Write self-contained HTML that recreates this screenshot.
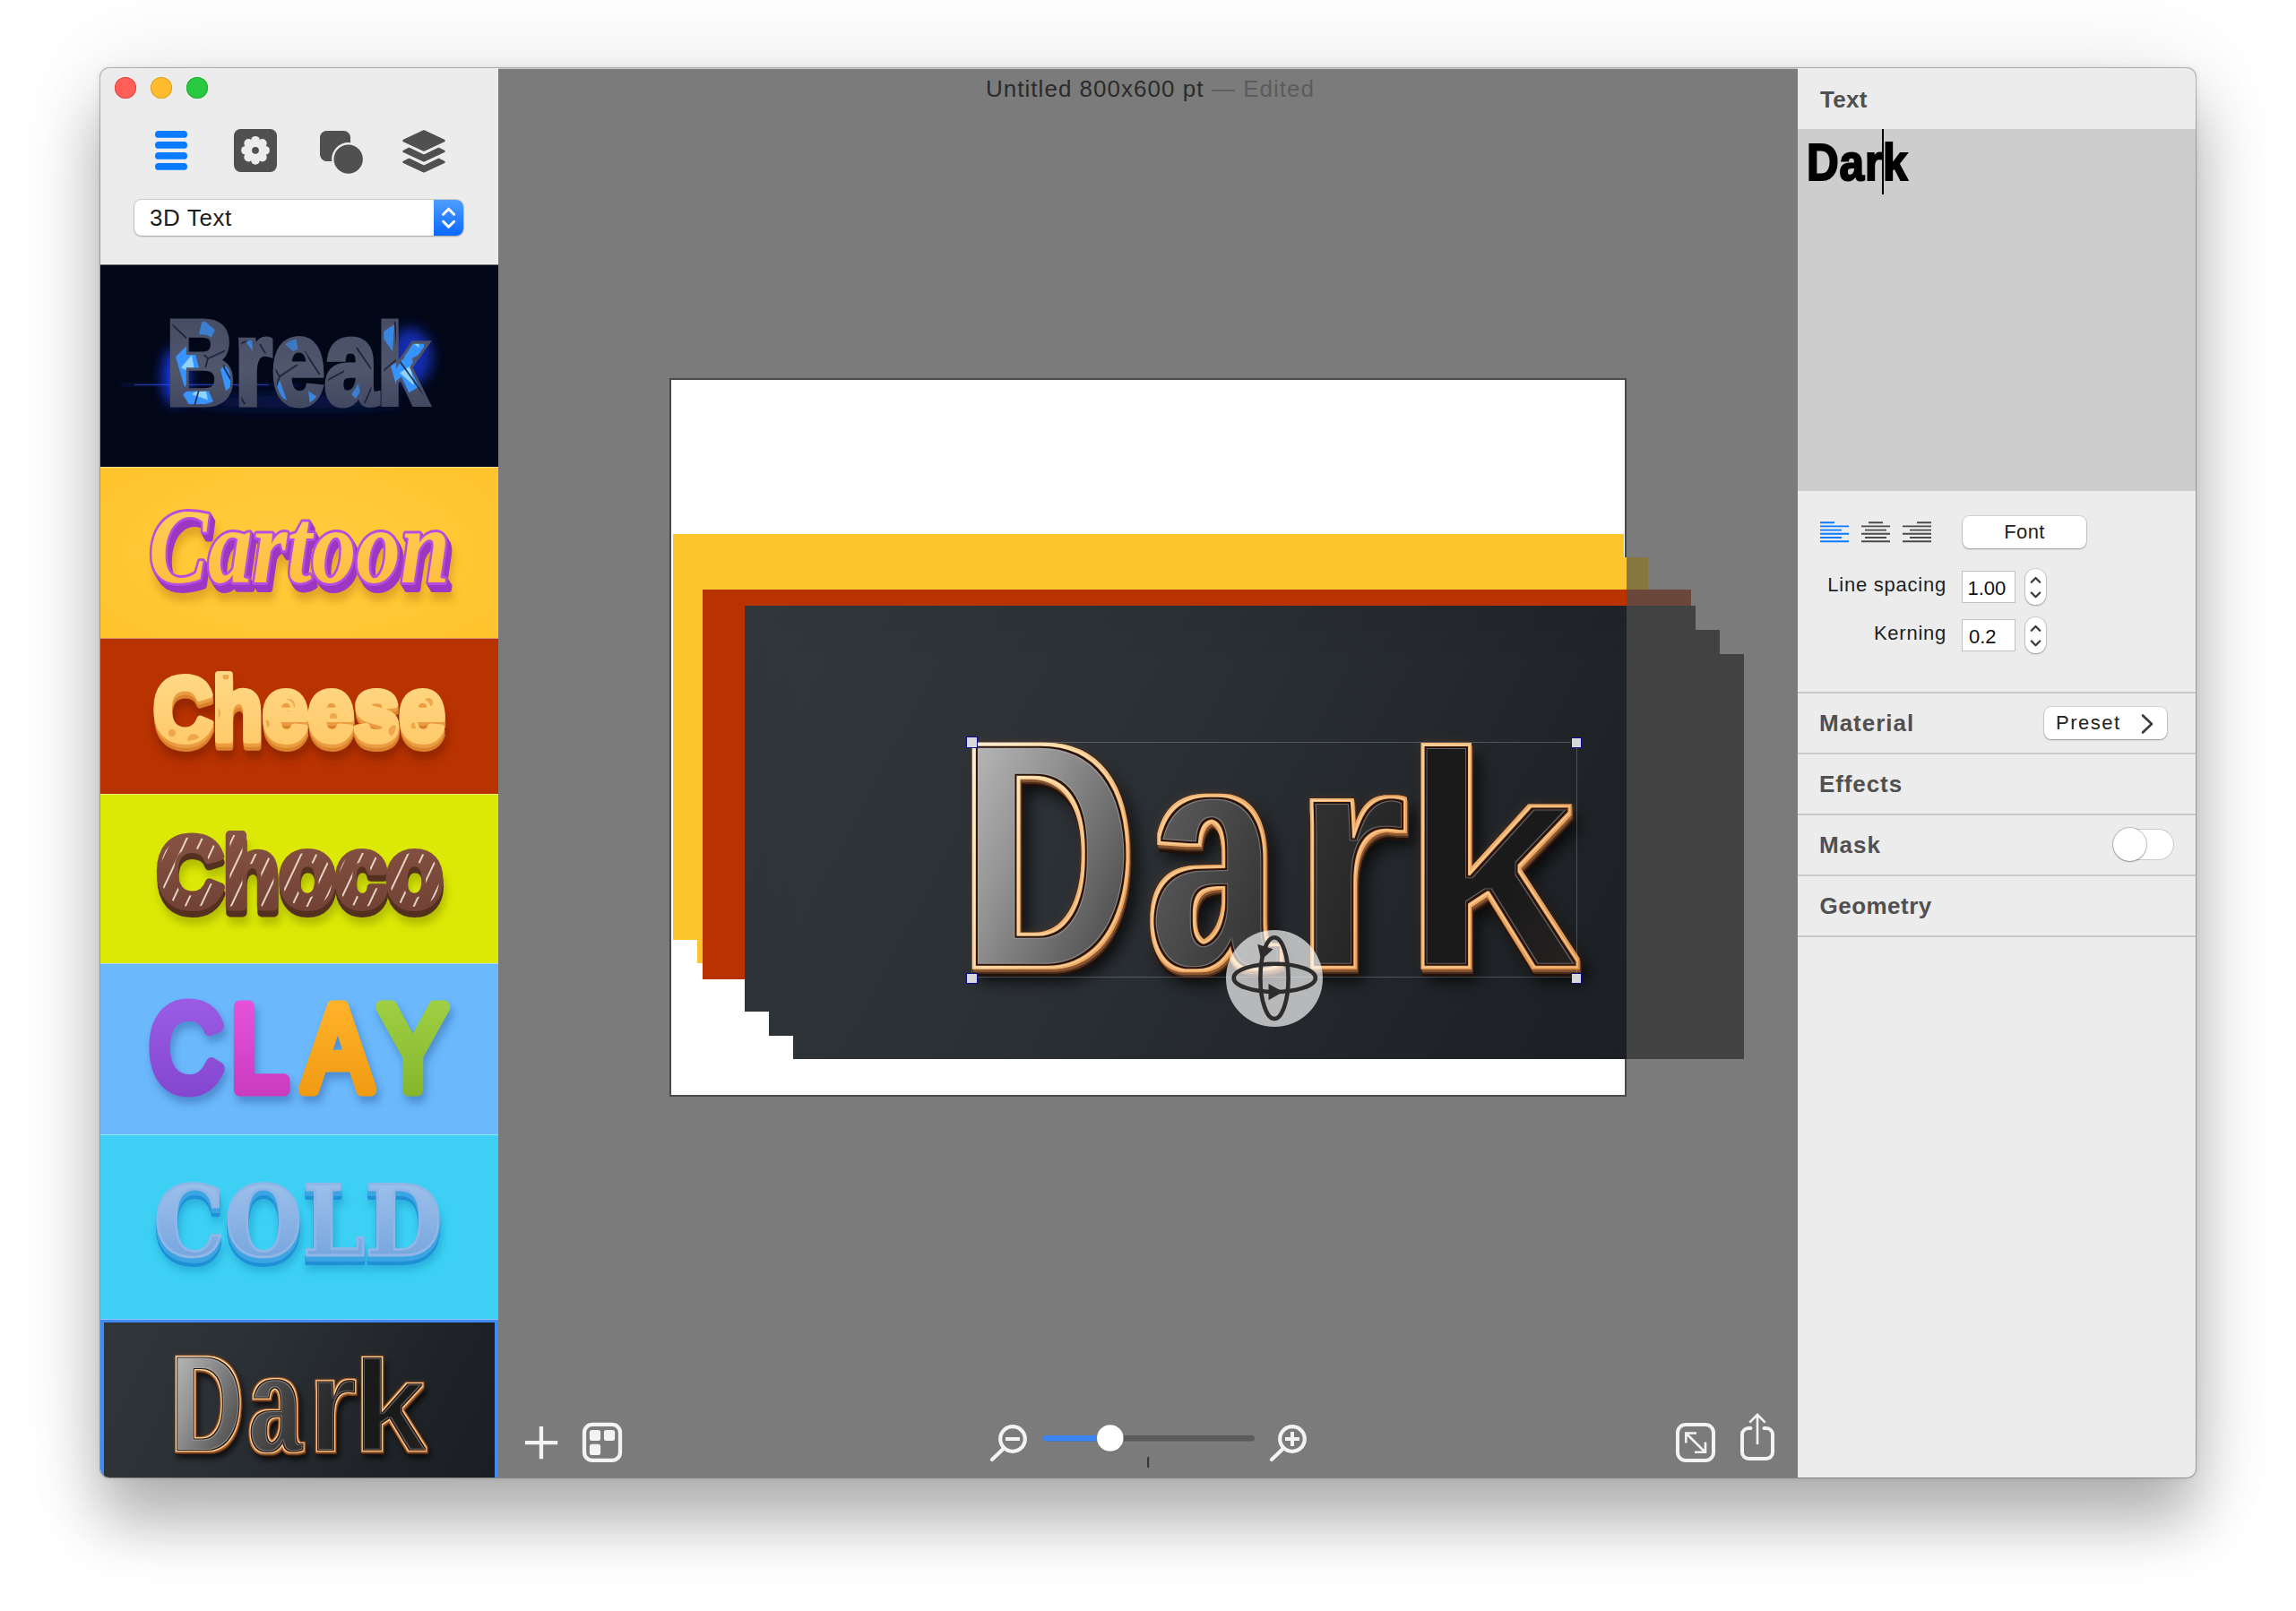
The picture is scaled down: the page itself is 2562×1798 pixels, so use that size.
<!DOCTYPE html>
<html lang="en">
<head>
<meta charset="utf-8">
<title>Untitled 800x600 pt</title>
<style>
*{box-sizing:border-box;margin:0;padding:0}
html,body{width:2562px;height:1798px;overflow:hidden;background:#fff}
body{font-family:"Liberation Sans",sans-serif;position:relative;color:#222}
.abs{position:absolute}
#win{position:absolute;left:112px;top:76px;width:2338px;height:1573px;border-radius:10px;overflow:hidden;background:#7b7b7b}
#winshadow{position:absolute;left:112px;top:76px;width:2338px;height:1573px;border-radius:10px;
 box-shadow:0 0 0 1px rgba(0,0,0,.24),0 50px 68px rgba(0,0,0,.28),0 0 110px rgba(0,0,0,.10),0 0 8px rgba(0,0,0,.10)}
#pg{position:absolute;left:-112px;top:-76px;width:2562px;height:1798px}
#sidebar{left:112px;top:76px;width:444px;height:1574px;background:#ececec}
#rpanel{left:2006px;top:76px;width:444px;height:1574px;background:#ececec}
#canvasarea{left:556px;top:76px;width:1450px;height:1574px;background:#7b7b7b;overflow:hidden}
.tl{position:absolute;width:24px;height:24px;border-radius:50%;top:86px}
.thumb{position:absolute;left:112px;width:444px;overflow:hidden;box-shadow:inset 0 1px 0 rgba(255,255,255,.45)}
.thumb svg{position:absolute;left:0;top:0}
.sep{position:absolute;left:2006px;width:444px;height:2px;background:#cbcbcb}
.h{position:absolute;left:2031px;font-weight:bold;font-size:26px;color:#505050;line-height:30px;white-space:nowrap}
.lbl{position:absolute;font-size:22px;color:#1f1f1f;line-height:26px;white-space:nowrap;text-align:right}
.field{position:absolute;background:#fff;border:1px solid #c2c2c2;font-size:22px;line-height:26px;color:#111;padding-left:7px}
.stepper{position:absolute;width:22.5px;height:40.5px;border-radius:11px;background:#fff;box-shadow:0 0 0 1px rgba(0,0,0,.12),0 1px 2px rgba(0,0,0,.25)}
.btn{position:absolute;background:#fff;border-radius:8px;box-shadow:0 0 0 1px rgba(0,0,0,.10),0 1px 2px rgba(0,0,0,.28);font-size:26px;color:#222;text-align:center}
.dk{background:linear-gradient(118deg,#31363b 0%,#2b3035 35%,#1f2327 75%,#1a1d21 100%)}
.hd{width:12.5px;height:12.5px;background:#d9d9d9;border:1.5px solid #0a0a8c}
</style>
</head>
<body>
<div id="winshadow"></div>
<div id="win"><div id="pg">

<!-- ================= CANVAS AREA ================= -->
<div id="canvasarea" class="abs"><div class="abs" style="left:-556px;top:-76px;width:2562px;height:1798px">
<div class="abs" style="left:556px;top:76px;width:1450px;height:1px;background:#c8c8c8"></div>
<!-- title -->
<div class="abs" style="left:558.5px;top:83px;width:1450px;text-align:center;font-size:26px;line-height:32px;color:#2b2b2b;white-space:nowrap;letter-spacing:1.03px" id="title">Untitled 800x600 pt <span style="color:#5c5c5c">— Edited</span></div>

<!-- document -->
<div class="abs" style="left:747px;top:422px;width:1068px;height:802px;background:#fff;border:2px solid #4a4a4a"></div>
<!-- layers outside the document (dimmed) -->
<div class="abs" style="left:1814.5px;top:622px;width:24.5px;height:40px;background:#86773f"></div>
<div class="abs" style="left:1814.5px;top:658px;width:72.5px;height:20px;background:#6a473a"></div>
<div class="abs" style="left:1814.5px;top:676px;width:77.5px;height:453px;background:#424242"></div>
<div class="abs" style="left:1814.5px;top:703px;width:104.5px;height:453px;background:#424242"></div>
<div class="abs" style="left:1814.5px;top:729.5px;width:131.5px;height:452px;background:#424242"></div>
<!-- layers inside the document -->
<div class="abs" style="left:749px;top:424px;width:1065.5px;height:798px;overflow:hidden"><div class="abs" style="left:-749px;top:-424px;width:2562px;height:1798px">
  <div class="abs" style="left:751px;top:596px;width:1061px;height:453px;background:#ffc52c"></div>
  <div class="abs" style="left:778px;top:622px;width:1061px;height:453px;background:#ffc52c"></div>
  <div class="abs" style="left:783.5px;top:658px;width:1104px;height:434.5px;background:#b83300"></div>
  <div class="abs dk" style="left:831px;top:676px;width:1061px;height:453px"></div>
  <div class="abs dk" style="left:858px;top:703px;width:1061px;height:453px"></div>
  <div class="abs dk" style="left:885px;top:729.5px;width:1061px;height:452px"></div>
  <!--DARKTEXT_BEGIN--><svg class="abs" style="left:1000px;top:760px" width="860" height="420" viewBox="1000 760 860 420">
<defs>
<linearGradient id="cfD" x1="0" y1="0" x2="1" y2="1"><stop offset="0" stop-color="#c9c9c9"/><stop offset=".4" stop-color="#939393"/><stop offset=".75" stop-color="#5a5a5a"/><stop offset="1" stop-color="#3a3a3a"/></linearGradient>
<linearGradient id="cfa" x1="0" y1="0" x2="1" y2="1"><stop offset="0" stop-color="#6b6b6b"/><stop offset=".6" stop-color="#424242"/><stop offset="1" stop-color="#2a2a2a"/></linearGradient>
<linearGradient id="cfr" x1="0" y1="0" x2="1" y2="1"><stop offset="0" stop-color="#3b3b3b"/><stop offset="1" stop-color="#1d1c1c"/></linearGradient>
<linearGradient id="cfk" x1="0" y1="0" x2="1" y2="1"><stop offset="0" stop-color="#1a1a1a"/><stop offset=".6" stop-color="#1c1b1b"/><stop offset="1" stop-color="#2b2725"/></linearGradient>
<linearGradient id="cgD" x1="0" y1="0" x2="1" y2="1"><stop offset="0" stop-color="#fffbea"/><stop offset=".35" stop-color="#fbd9a4"/><stop offset=".7" stop-color="#f0ae6a"/><stop offset="1" stop-color="#e2934d"/></linearGradient>
<linearGradient id="cgO" x1="0" y1="0" x2="1" y2="1"><stop offset="0" stop-color="#f9c98c"/><stop offset=".5" stop-color="#f0ad69"/><stop offset="1" stop-color="#df8d48"/></linearGradient>
<filter id="cPA" x="1000" y="760" width="860" height="420" filterUnits="userSpaceOnUse" color-interpolation-filters="sRGB"><feMorphology in="SourceGraphic" operator="erode" radius="0 6" result="e"/><feMorphology in="e" operator="dilate" radius="2 0"/></filter><filter id="cPB" x="1000" y="760" width="860" height="420" filterUnits="userSpaceOnUse" color-interpolation-filters="sRGB"><feMorphology in="SourceGraphic" operator="erode" radius="3 6"/></filter>
<filter id="cF1" x="1000" y="760" width="860" height="420" filterUnits="userSpaceOnUse" color-interpolation-filters="sRGB">
  <feMorphology in="SourceGraphic" operator="dilate" radius="5.6" result="rim"/>
  <feMorphology in="SourceAlpha" operator="dilate" radius="6.2" result="rimA"/>
  <feMorphology in="SourceGraphic" operator="dilate" radius="4.4" result="hl0"/>
  <feComponentTransfer in="hl0" result="hl"><feFuncR type="linear" slope=".45" intercept=".56"/><feFuncG type="linear" slope=".45" intercept=".53"/><feFuncB type="linear" slope=".5" intercept=".42"/></feComponentTransfer>
  <feMorphology in="SourceGraphic" operator="dilate" radius="3.1" result="rim2"/>
  <feFlood flood-color="#b9672a" result="oc"/><feComposite in="oc" in2="rimA" operator="in" result="rimO"/>
  <feOffset in="rimA" dx="8" dy="13" result="sh0"/>
  <feGaussianBlur in="sh0" stdDeviation="9" result="sh1"/>
  <feComponentTransfer in="sh1" result="shadow"><feFuncA type="linear" slope=".8"/></feComponentTransfer>
  <feGaussianBlur in="rimA" stdDeviation="5" result="gl0"/>
  <feFlood flood-color="#a8521b" flood-opacity=".3" result="glc"/>
  <feComposite in="glc" in2="gl0" operator="in" result="glow"/>
  <feOffset in="rimA" dx=".8" dy="2.5" result="x1"/>
  <feOffset in="rimA" dx="1.6" dy="5" result="x2"/>
  <feOffset in="rimA" dx="2.4" dy="7.5" result="x3"/>
  <feFlood flood-color="#8a5631" result="xc1"/><feComposite in="xc1" in2="x1" operator="in" result="ex1"/>
  <feFlood flood-color="#4f2e1c" result="xc2"/><feComposite in="xc2" in2="x2" operator="in" result="ex2"/>
  <feFlood flood-color="#20110b" result="xc3"/><feComposite in="xc3" in2="x3" operator="in" result="ex3"/>
  <feMerge><feMergeNode in="shadow"/><feMergeNode in="glow"/><feMergeNode in="ex3"/><feMergeNode in="ex2"/><feMergeNode in="ex1"/><feMergeNode in="rimO"/><feMergeNode in="rim"/><feMergeNode in="hl"/><feMergeNode in="rim2"/></feMerge>
</filter>
<filter id="cF2" x="1000" y="760" width="860" height="420" filterUnits="userSpaceOnUse" color-interpolation-filters="sRGB"><feMorphology in="SourceGraphic" operator="dilate" radius="1.9"/></filter>
<filter id="cF3" x="1000" y="760" width="860" height="420" filterUnits="userSpaceOnUse" color-interpolation-filters="sRGB">
  <feComponentTransfer in="SourceGraphic" result="lite"><feFuncR type="linear" slope=".6" intercept=".3"/><feFuncG type="linear" slope=".6" intercept=".3"/><feFuncB type="linear" slope=".6" intercept=".3"/></feComponentTransfer>
  <feMorphology in="SourceGraphic" operator="erode" radius="1.3" result="inner"/>
  <feMerge><feMergeNode in="lite"/><feMergeNode in="inner"/></feMerge>
</filter>
</defs>
<g font-family="Liberation Sans, sans-serif" font-weight="bold">
<g filter="url(#cF1)">
<g filter="url(#cPA)"><text transform="translate(1075.5 1081.8) scale(0.719 1.016)" font-size="362" fill="url(#cgD)">D</text></g>
<g filter="url(#cPA)"><text transform="translate(1284.0 1081.8) scale(0.686 1.007)" font-size="362" fill="url(#cgO)">a</text></g>
<g filter="url(#cPB)"><text transform="translate(1442.0 1081.8) scale(0.923 0.998)" font-size="362" fill="url(#cgO)">r</text></g>
<g filter="url(#cPB)"><text transform="translate(1563.0 1081.8) scale(1.014 0.964)" font-size="362" fill="url(#cgO)">k</text></g>
</g>
<g filter="url(#cF2)">
<g filter="url(#cPA)"><text transform="translate(1075.5 1081.8) scale(0.719 1.016)" font-size="362" fill="#2a130b">D</text></g>
<g filter="url(#cPA)"><text transform="translate(1284.0 1081.8) scale(0.686 1.007)" font-size="362" fill="#2a130b">a</text></g>
<g filter="url(#cPB)"><text transform="translate(1442.0 1081.8) scale(0.923 0.998)" font-size="362" fill="#2a130b">r</text></g>
<g filter="url(#cPB)"><text transform="translate(1563.0 1081.8) scale(1.014 0.964)" font-size="362" fill="#2a130b">k</text></g>
</g>
<g filter="url(#cF3)">
<g filter="url(#cPA)"><text transform="translate(1075.5 1081.8) scale(0.719 1.016)" font-size="362" fill="url(#cfD)">D</text></g>
<g filter="url(#cPA)"><text transform="translate(1284.0 1081.8) scale(0.686 1.007)" font-size="362" fill="url(#cfa)">a</text></g>
<g filter="url(#cPB)"><text transform="translate(1442.0 1081.8) scale(0.923 0.998)" font-size="362" fill="url(#cfr)">r</text></g>
<g filter="url(#cPB)"><text transform="translate(1563.0 1081.8) scale(1.014 0.964)" font-size="362" fill="url(#cfk)">k</text></g>
</g>
</g>
</svg><!--DARKTEXT_END-->
</div></div>

<!-- selection -->
<div class="abs" style="left:1084px;top:827.5px;width:676px;height:263.5px;border:1px solid rgba(200,205,215,.28)"></div>
<div class="abs hd" style="left:1078px;top:822px"></div>
<div class="abs hd" style="left:1752.5px;top:822.5px"></div>
<div class="abs hd" style="left:1078px;top:1085.5px"></div>
<div class="abs hd" style="left:1752.5px;top:1085.5px"></div>

<!-- rotate gizmo -->
<svg class="abs" style="left:1365.7px;top:1035.5px" width="112" height="112" viewBox="-56 -56 112 112">
  <circle r="54" fill="rgba(255,255,255,.67)"/>
  <g fill="none" stroke="#2d2d2d" stroke-width="4.6">
    <ellipse rx="45.6" ry="15.6" cx="0.3" cy="-0.6"/>
    <ellipse rx="15.6" ry="45.4" cx="0" cy="-0.3"/>
  </g>
  <path d="M-18.7 -38 L-1.3 -32.8 L-14.8 -20.6 Z" fill="#2d2d2d"/>
  <path d="M-6.5 5.9 L9.8 15 L-6.5 24.2 Z" fill="#2d2d2d"/>
</svg>

<!-- bottom toolbar -->
<svg class="abs" style="left:570px;top:1560px" width="1430" height="90" viewBox="570 1560 1430 90">
  <g fill="none" stroke="#f3f3f3" stroke-linecap="butt">
    <path d="M585.9 1610.05 H622.2 M603.95 1591.9 V1628.2" stroke-width="4.3"/>
    <rect x="652" y="1589.75" width="40" height="40.2" rx="9" stroke-width="4.25"/>
  </g>
  <g fill="#f3f3f3">
    <rect x="657.9" y="1596" width="12.2" height="12.1" rx="2.5"/>
    <rect x="673.9" y="1596" width="12.2" height="12.1" rx="2.5"/>
    <rect x="657.9" y="1611.8" width="12.2" height="12.3" rx="2.5"/>
  </g>
  <!-- zoom out -->
  <g fill="none" stroke="#f3f3f3" stroke-width="4.2" stroke-linecap="round">
    <circle cx="1130" cy="1606" r="13.8"/>
    <path d="M1120 1616.5 L1107 1629"/>
    <circle cx="1442" cy="1606" r="13.8"/>
    <path d="M1432 1616.5 L1419 1629"/>
  </g>
  <g fill="#f3f3f3">
    <rect x="1122" y="1604" width="16" height="4"/>
    <rect x="1434" y="1604" width="16" height="4"/>
    <rect x="1440" y="1598" width="4" height="16"/>
  </g>
  <!-- slider -->
  <rect x="1164" y="1602" width="236" height="6.4" rx="3.2" fill="#5b5b5b"/>
  <rect x="1164" y="1602" width="78" height="6.4" rx="3.2" fill="#3b86f7"/>
  <circle cx="1238.8" cy="1605.6" r="15" fill="rgba(0,0,0,.18)"/>
  <circle cx="1238.8" cy="1605" r="14.8" fill="#fff"/>
  <rect x="1280" y="1626.3" width="2.2" height="11.5" fill="#383838"/>
  <!-- fit -->
  <g fill="none" stroke="#f3f3f3">
    <rect x="1872" y="1590" width="40" height="40" rx="9" stroke-width="4"/>
    <path d="M1881.5 1599.8 L1902.5 1620.5 M1881.3 1610.5 V1599.5 H1893 M1903 1609.5 V1620.8 H1891" stroke-width="2.6"/>
    <path d="M1953.5 1594 H1951 a7 7 0 0 0 -7 7 V1621 a7 7 0 0 0 7 7 H1971 a7 7 0 0 0 7 -7 V1601 a7 7 0 0 0 -7 -7 H1968.5" stroke-width="4" stroke-linecap="round"/>
    <path d="M1961 1612 V1579.5 M1952.3 1587.6 L1961 1578.8 L1969.7 1587.6" stroke-width="2.6"/>
  </g>
</svg>

</div></div>

<!-- ================= SIDEBAR ================= -->
<div id="sidebar" class="abs"></div>
<div class="tl" style="left:128px;background:#ff5f57;box-shadow:inset 0 0 0 1px #e2463f"></div>
<div class="tl" style="left:168px;background:#febc2e;box-shadow:inset 0 0 0 1px #e0a023"></div>
<div class="tl" style="left:208px;background:#28c840;box-shadow:inset 0 0 0 1px #1fae32"></div>

<!-- toolbar icons -->
<svg class="abs" style="left:160px;top:136px" width="360" height="66" viewBox="160 136 360 66">
  <g fill="#0a7aff">
    <rect x="173" y="146" width="36" height="7.8" rx="3.9"/>
    <rect x="173" y="158" width="36" height="7.8" rx="3.9"/>
    <rect x="173" y="170" width="36" height="7.8" rx="3.9"/>
    <rect x="173" y="182" width="36" height="7.8" rx="3.9"/>
  </g>
  <rect x="261" y="144" width="48" height="48" rx="7.5" fill="#505050"/>
  <g fill="#ececec" transform="translate(285 167.8)">
    <circle cx="0" cy="-11" r="4.9"/><circle cx="0" cy="-11" r="4.9" transform="rotate(45)"/><circle cx="0" cy="-11" r="4.9" transform="rotate(90)"/><circle cx="0" cy="-11" r="4.9" transform="rotate(135)"/><circle cx="0" cy="-11" r="4.9" transform="rotate(180)"/><circle cx="0" cy="-11" r="4.9" transform="rotate(225)"/><circle cx="0" cy="-11" r="4.9" transform="rotate(270)"/><circle cx="0" cy="-11" r="4.9" transform="rotate(315)"/>
    <circle cx="0" cy="0" r="10.8"/>
    <circle cx="0" cy="0" r="3.9" fill="#505050"/>
  </g>
  <rect x="357" y="146" width="34" height="34" rx="7.5" fill="#505050"/>
  <circle cx="388.7" cy="177.6" r="18.6" fill="#ececec"/>
  <circle cx="388.7" cy="177.6" r="16.2" fill="#505050"/>
  <g fill="#505050" stroke="#505050" stroke-width="2.5" stroke-linejoin="round">
    <path d="M473 146.5 L495.5 157 L473 167.5 L450.5 157 Z"/>
    <path d="M450.5 168.8 L456.5 166 L473 173.8 L489.5 166 L495.5 168.8 L473 179.3 Z"/>
    <path d="M450.5 180.8 L456.5 178 L473 185.8 L489.5 178 L495.5 180.8 L473 191.3 Z"/>
  </g>
</svg>

<!-- dropdown -->
<div class="abs" style="left:150px;top:223px;width:367px;height:40px;border-radius:8px;background:#fff;box-shadow:0 0 0 1px rgba(0,0,0,.13),0 1px 2px rgba(0,0,0,.22);overflow:hidden">
  <div class="abs" style="left:17px;top:4px;font-size:26px;line-height:32px;color:#1d1d1d;letter-spacing:.6px">3D Text</div>
  <div class="abs" style="left:334px;top:0;width:33px;height:40px;background:linear-gradient(#4f9eff,#0a68ff)"></div>
  <svg class="abs" style="left:334px;top:0" width="33" height="40" viewBox="0 0 33 40"><g fill="none" stroke="#fff" stroke-width="3" stroke-linecap="round" stroke-linejoin="round"><path d="M10.6 16.2 L16.6 10.2 L22.6 16.2"/><path d="M10.6 24.3 L16.6 30.3 L22.6 24.3"/></g></svg>
</div>

<!--THUMBS_BEGIN--><div class="thumb" style="top:294.8px;height:226.2px;background:#030818"><svg width="444" height="227" viewBox="112 294.8 444 227" font-family="Liberation Sans, sans-serif" font-weight="bold">
<defs>
<filter id="bB" x="-30%" y="-60%" width="160%" height="220%"><feGaussianBlur stdDeviation="7"/></filter>
<filter id="bB2" x="-30%" y="-60%" width="160%" height="220%"><feGaussianBlur stdDeviation="3"/></filter>
<clipPath id="bC"><text transform="translate(185.5 450.5) scale(0.797 1)" font-size="133" stroke-width="6">Brea<tspan font-size="125.5">k</tspan></text></clipPath>
<linearGradient id="bG" x1="0" y1="0" x2="0" y2="1"><stop offset="0" stop-color="#42485f"/><stop offset=".55" stop-color="#50566c"/><stop offset="1" stop-color="#3a4058"/></linearGradient>
</defs>
<g filter="url(#bB)"><ellipse cx="196" cy="420" rx="15" ry="32" fill="#1a3cf0" opacity=".9"/><ellipse cx="458" cy="398" rx="24" ry="32" fill="#1a3cf0" opacity=".7"/><ellipse cx="330" cy="448" rx="120" ry="8" fill="#1233c0" opacity=".35"/></g>
<rect x="135" y="428.4" width="200" height="1.6" fill="#2440d8" opacity=".6" filter="url(#bB2)"/>
<rect x="150" y="428.7" width="150" height="1" fill="#3558f0" opacity=".7"/>
<text transform="translate(185.5 450.5) scale(0.797 1)" font-size="133" fill="url(#bG)" stroke="url(#bG)" stroke-width="7" stroke-linejoin="miter">Brea<tspan font-size="125.5">k</tspan></text>
<g clip-path="url(#bC)">
 <g fill="#3793ff"><path d="M196 398 L214 380 L222 410 L206 432 Z"/><path d="M204 440 L226 420 L238 448 L214 456 Z"/><path d="M246 412 L262 398 L268 424 L252 436 Z"/><path d="M226 356 L240 368 L232 384 L222 372 Z" opacity=".7"/><path d="M268 372 L280 364 L282 392 Z" opacity=".7"/>
 <path d="M446 368 L468 350 L474 392 L452 404 Z"/><path d="M436 408 L458 396 L470 430 L446 444 Z"/><path d="M424 372 L440 362 L438 392 Z" opacity=".8"/><path d="M298 440 L312 424 L320 446 Z" opacity=".8"/><path d="M344 436 L356 444 L346 452 Z" opacity=".8"/><path d="M392 440 L400 428 L404 452 Z" opacity=".7"/><path d="M318 384 L330 376 L334 398 Z" opacity=".6"/></g>
 <g fill="#8fd4ff"><path d="M202 410 L214 396 L218 418 Z"/><path d="M214 440 L228 428 L232 446 Z"/><path d="M452 376 L464 364 L468 388 Z"/><path d="M446 416 L458 408 L462 430 Z"/></g>
 <g stroke="#151b36" stroke-width="1.6" fill="none" opacity=".9"><path d="M190 360 L232 400 L216 456 M232 400 L276 380 M258 356 L250 410 L276 456 M290 384 L312 420 L300 456 M312 420 L336 404 M340 392 L362 426 L350 456 M362 426 L384 414 M398 388 L420 420 L404 456 M420 420 L444 400 L484 456 M444 400 L440 352"/></g>
</g>
</svg></div>
<div class="thumb" style="top:521px;height:191px;background:radial-gradient(ellipse 70% 80% at 50% 50%,#ffcd3e 0%,#ffc32c 100%)"><svg width="444" height="191" viewBox="112 521 444 191" font-family="Liberation Serif, serif" font-weight="bold" font-style="italic">
<defs><filter id="cB" x="-10%" y="-30%" width="120%" height="180%"><feGaussianBlur stdDeviation="5"/></filter>
<linearGradient id="cG" x1="0" y1="0" x2="0" y2="1"><stop offset="0" stop-color="#ffd35e"/><stop offset="1" stop-color="#ffb83a"/></linearGradient></defs>
<g filter="url(#cB)" opacity=".55"><text transform="translate(172 666) scale(0.84 1)" font-size="118" fill="#c98512" stroke="#c98512" stroke-width="8">Cartoon</text></g>
<text transform="translate(167.2 652) scale(0.84 1)" font-size="118" fill="#9c37c4" stroke="#9c37c4" stroke-width="6" stroke-linejoin="round">Cartoon</text><text transform="translate(168.4 654) scale(0.84 1)" font-size="118" fill="#9c37c4" stroke="#9c37c4" stroke-width="6" stroke-linejoin="round">Cartoon</text><text transform="translate(169.6 656) scale(0.84 1)" font-size="118" fill="#9c37c4" stroke="#9c37c4" stroke-width="6" stroke-linejoin="round">Cartoon</text><text transform="translate(170.8 658) scale(0.84 1)" font-size="118" fill="#9c37c4" stroke="#9c37c4" stroke-width="6" stroke-linejoin="round">Cartoon</text>
<text transform="translate(166 650) scale(0.84 1)" font-size="118" fill="url(#cG)" stroke="#b84ce0" stroke-width="6" stroke-linejoin="round" paint-order="stroke">Cartoon</text>
</svg></div>
<div class="thumb" style="top:712px;height:174px;background:#b83300"><svg width="444" height="174" viewBox="112 712 444 174" font-family="Liberation Sans, sans-serif" font-weight="bold">
<defs><filter id="hB" x="-10%" y="-30%" width="120%" height="180%"><feGaussianBlur stdDeviation="5"/></filter>
<clipPath id="hC"><text transform="translate(171.2 825.5) scale(0.914 1)" font-size="100" stroke-width="7">Cheese</text></clipPath>
<linearGradient id="hG" x1="0" y1="0" x2="0" y2="1"><stop offset="0" stop-color="#ffdb8a"/><stop offset="1" stop-color="#ffc766"/></linearGradient></defs>
<g filter="url(#hB)" opacity=".6"><text transform="translate(173.2 841.5) scale(0.914 1)" font-size="100" fill="#7a1c00" stroke="#7a1c00" stroke-width="9">Cheese</text></g>
<text transform="translate(171.7 833.5) scale(0.914 1)" font-size="100" fill="#d9812b" stroke="#d9812b" stroke-width="8" stroke-linejoin="round">Cheese</text>
<text transform="translate(171.5 830.0) scale(0.914 1)" font-size="100" fill="#eb9c40" stroke="#eb9c40" stroke-width="8" stroke-linejoin="round">Cheese</text>
<text transform="translate(171.2 825.5) scale(0.914 1)" font-size="100" fill="url(#hG)" stroke="url(#hG)" stroke-width="8" stroke-linejoin="round">Cheese</text>
<g clip-path="url(#hC)" fill="#f0a64a"><circle cx="207" cy="775" r="5"/><circle cx="216" cy="826" r="7"/><circle cx="192" cy="818" r="4"/><circle cx="238" cy="796" r="8"/><circle cx="262" cy="793" r="5.5"/><circle cx="322" cy="787" r="7"/><circle cx="296" cy="808" r="5"/><circle cx="312" cy="830" r="4"/><circle cx="372" cy="800" r="4"/><circle cx="398" cy="832" r="5"/><circle cx="440" cy="816" r="6.5"/><circle cx="446" cy="778" r="4"/><circle cx="478" cy="784" r="5"/><circle cx="462" cy="810" r="3.5"/><circle cx="252" cy="755" r="3.5"/></g>
</svg></div>
<div class="thumb" style="top:886px;height:189px;background:#dce805"><svg width="444" height="189" viewBox="112 886 444 189" font-family="Liberation Sans, sans-serif" font-weight="bold">
<defs><filter id="oB" x="-10%" y="-30%" width="120%" height="180%"><feGaussianBlur stdDeviation="5"/></filter>
<clipPath id="oC"><text transform="translate(175.2 1010.5) scale(0.931 1)" font-size="110" stroke-width="6">Choco</text></clipPath>
<linearGradient id="oG" x1="0" y1="0" x2="0" y2="1"><stop offset="0" stop-color="#8b5646"/><stop offset="1" stop-color="#6d3f32"/></linearGradient></defs>
<g filter="url(#oB)" opacity=".55"><text transform="translate(178.2 1025.5) scale(0.931 1)" font-size="110" fill="#8e9a00" stroke="#8e9a00" stroke-width="10">Choco</text></g>
<text transform="translate(175.7 1017.5) scale(0.931 1)" font-size="110" fill="#54301f" stroke="#54301f" stroke-width="10" stroke-linejoin="round">Choco</text>
<text transform="translate(175.2 1010.5) scale(0.931 1)" font-size="110" fill="url(#oG)" stroke="url(#oG)" stroke-width="10" stroke-linejoin="round">Choco</text>
<g clip-path="url(#oC)" stroke="#f3e2d2" stroke-width="2" fill="none" opacity=".9"><path d="M130 1030 L182 920" /><path d="M147 1030 L199 920" /><path d="M164 1030 L216 920" /><path d="M181 1030 L233 920" /><path d="M198 1030 L250 920" /><path d="M215 1030 L267 920" /><path d="M232 1030 L284 920" /><path d="M249 1030 L301 920" /><path d="M266 1030 L318 920" /><path d="M283 1030 L335 920" /><path d="M300 1030 L352 920" /><path d="M317 1030 L369 920" /><path d="M334 1030 L386 920" /><path d="M351 1030 L403 920" /><path d="M368 1030 L420 920" /><path d="M385 1030 L437 920" /><path d="M402 1030 L454 920" /><path d="M419 1030 L471 920" /><path d="M436 1030 L488 920" /><path d="M453 1030 L505 920" /><path d="M470 1030 L522 920" /><path d="M487 1030 L539 920" /><path d="M504 1030 L556 920" /></g>
</svg></div>
<div class="thumb" style="top:1075px;height:190.5px;background:#6bb8fc"><svg width="444" height="191" viewBox="112 1075 444 191" font-family="Liberation Sans, sans-serif">
<defs><filter id="yB" x="-10%" y="-30%" width="120%" height="180%"><feGaussianBlur stdDeviation="4"/></filter><linearGradient id="yGC" gradientUnits="userSpaceOnUse" x1="0" y1="-100" x2="0" y2="10"><stop offset="0" stop-color="#9a5ce4"/><stop offset="1" stop-color="#8446cf"/></linearGradient><linearGradient id="yGL" gradientUnits="userSpaceOnUse" x1="0" y1="-100" x2="0" y2="10"><stop offset="0" stop-color="#e653da"/><stop offset="1" stop-color="#c93abf"/></linearGradient><linearGradient id="yGA" gradientUnits="userSpaceOnUse" x1="0" y1="-100" x2="0" y2="10"><stop offset="0" stop-color="#ffb32a"/><stop offset="1" stop-color="#f09a12"/></linearGradient><linearGradient id="yGY" gradientUnits="userSpaceOnUse" x1="0" y1="-100" x2="0" y2="10"><stop offset="0" stop-color="#9fd043"/><stop offset="1" stop-color="#84b52c"/></linearGradient></defs>
<g filter="url(#yB)" opacity=".45"><text transform="translate(0 1223) scale(0.85 1)" x="200.0 307.1 402.4 501.2" font-size="133" fill="#2a5f9e" stroke="#2a5f9e" stroke-width="16" stroke-linejoin="round"><tspan >C</tspan><tspan >L</tspan><tspan >A</tspan><tspan >Y</tspan></text></g>
<text transform="translate(0 1216) scale(0.85 1)" x="196.5 303.5 398.8 497.6" font-size="133" stroke-width="15" stroke-linejoin="round"><tspan fill="url(#yGC)" stroke="url(#yGC)">C</tspan><tspan fill="url(#yGL)" stroke="url(#yGL)">L</tspan><tspan fill="url(#yGA)" stroke="url(#yGA)">A</tspan><tspan fill="url(#yGY)" stroke="url(#yGY)">Y</tspan></text>
</svg></div>
<div class="thumb" style="top:1265.5px;height:206.5px;background:#3dd0f4"><svg width="444" height="207" viewBox="112 1265.5 444 207" font-family="DejaVu Serif, serif" font-weight="bold">
<defs><filter id="dB" x="-10%" y="-30%" width="120%" height="180%"><feGaussianBlur stdDeviation="4"/></filter>
<linearGradient id="dG" x1="0" y1="0" x2="0" y2="1"><stop offset="0" stop-color="#a7c6ee"/><stop offset="1" stop-color="#6c9fdb"/></linearGradient></defs>
<g filter="url(#dB)" opacity=".5"><text transform="translate(173.5 1414) scale(0.913 1)" font-size="109" fill="#1592c4" stroke="#1592c4" stroke-width="6">COLD</text></g>
<text transform="translate(171.5 1409) scale(0.913 1)" font-size="109" fill="#1f8fd6" stroke="#1f8fd6" stroke-width="4" stroke-linejoin="round">COLD</text>
<text transform="translate(171.5 1405) scale(0.913 1)" font-size="109" fill="#3aa5e2" stroke="#3aa5e2" stroke-width="4" stroke-linejoin="round">COLD</text>
<text transform="translate(171.5 1400) scale(0.913 1)" font-size="109" fill="url(#dG)" stroke="#8fb6e6" stroke-width="3" stroke-linejoin="round">COLD</text>
</svg></div>
<div class="thumb" style="top:1472px;height:178px;background:#3d8df5"><div class="abs dk" style="left:4px;top:4px;width:436px;height:174px"></div><svg width="444" height="178" viewBox="112 1472 444 178">
<g transform="translate(-254.27 1159.02) scale(0.415 0.427)">
<defs>
<linearGradient id="tfD" x1="0" y1="0" x2="1" y2="1"><stop offset="0" stop-color="#c9c9c9"/><stop offset=".4" stop-color="#939393"/><stop offset=".75" stop-color="#5a5a5a"/><stop offset="1" stop-color="#3a3a3a"/></linearGradient>
<linearGradient id="tfa" x1="0" y1="0" x2="1" y2="1"><stop offset="0" stop-color="#6b6b6b"/><stop offset=".6" stop-color="#424242"/><stop offset="1" stop-color="#2a2a2a"/></linearGradient>
<linearGradient id="tfr" x1="0" y1="0" x2="1" y2="1"><stop offset="0" stop-color="#3b3b3b"/><stop offset="1" stop-color="#1d1c1c"/></linearGradient>
<linearGradient id="tfk" x1="0" y1="0" x2="1" y2="1"><stop offset="0" stop-color="#1a1a1a"/><stop offset=".6" stop-color="#1c1b1b"/><stop offset="1" stop-color="#2b2725"/></linearGradient>
<linearGradient id="tgD" x1="0" y1="0" x2="1" y2="1"><stop offset="0" stop-color="#fffbea"/><stop offset=".35" stop-color="#fbd9a4"/><stop offset=".7" stop-color="#f0ae6a"/><stop offset="1" stop-color="#e2934d"/></linearGradient>
<linearGradient id="tgO" x1="0" y1="0" x2="1" y2="1"><stop offset="0" stop-color="#f9c98c"/><stop offset=".5" stop-color="#f0ad69"/><stop offset="1" stop-color="#df8d48"/></linearGradient>
<filter id="tPA" x="1000" y="760" width="860" height="420" filterUnits="userSpaceOnUse" color-interpolation-filters="sRGB"><feMorphology in="SourceGraphic" operator="erode" radius="0 6" result="e"/><feMorphology in="e" operator="dilate" radius="2 0"/></filter><filter id="tPB" x="1000" y="760" width="860" height="420" filterUnits="userSpaceOnUse" color-interpolation-filters="sRGB"><feMorphology in="SourceGraphic" operator="erode" radius="3 6"/></filter>
<filter id="tF1" x="1000" y="760" width="860" height="420" filterUnits="userSpaceOnUse" color-interpolation-filters="sRGB">
  <feMorphology in="SourceGraphic" operator="dilate" radius="5.6" result="rim"/>
  <feMorphology in="SourceAlpha" operator="dilate" radius="6.2" result="rimA"/>
  <feMorphology in="SourceGraphic" operator="dilate" radius="4.4" result="hl0"/>
  <feComponentTransfer in="hl0" result="hl"><feFuncR type="linear" slope=".45" intercept=".56"/><feFuncG type="linear" slope=".45" intercept=".53"/><feFuncB type="linear" slope=".5" intercept=".42"/></feComponentTransfer>
  <feMorphology in="SourceGraphic" operator="dilate" radius="3.1" result="rim2"/>
  <feFlood flood-color="#b9672a" result="oc"/><feComposite in="oc" in2="rimA" operator="in" result="rimO"/>
  <feOffset in="rimA" dx="8" dy="13" result="sh0"/>
  <feGaussianBlur in="sh0" stdDeviation="9" result="sh1"/>
  <feComponentTransfer in="sh1" result="shadow"><feFuncA type="linear" slope=".8"/></feComponentTransfer>
  <feGaussianBlur in="rimA" stdDeviation="5" result="gl0"/>
  <feFlood flood-color="#a8521b" flood-opacity=".3" result="glc"/>
  <feComposite in="glc" in2="gl0" operator="in" result="glow"/>
  <feOffset in="rimA" dx=".8" dy="2.5" result="x1"/>
  <feOffset in="rimA" dx="1.6" dy="5" result="x2"/>
  <feOffset in="rimA" dx="2.4" dy="7.5" result="x3"/>
  <feFlood flood-color="#8a5631" result="xc1"/><feComposite in="xc1" in2="x1" operator="in" result="ex1"/>
  <feFlood flood-color="#4f2e1c" result="xc2"/><feComposite in="xc2" in2="x2" operator="in" result="ex2"/>
  <feFlood flood-color="#20110b" result="xc3"/><feComposite in="xc3" in2="x3" operator="in" result="ex3"/>
  <feMerge><feMergeNode in="shadow"/><feMergeNode in="glow"/><feMergeNode in="ex3"/><feMergeNode in="ex2"/><feMergeNode in="ex1"/><feMergeNode in="rimO"/><feMergeNode in="rim"/><feMergeNode in="hl"/><feMergeNode in="rim2"/></feMerge>
</filter>
<filter id="tF2" x="1000" y="760" width="860" height="420" filterUnits="userSpaceOnUse" color-interpolation-filters="sRGB"><feMorphology in="SourceGraphic" operator="dilate" radius="1.9"/></filter>
<filter id="tF3" x="1000" y="760" width="860" height="420" filterUnits="userSpaceOnUse" color-interpolation-filters="sRGB">
  <feComponentTransfer in="SourceGraphic" result="lite"><feFuncR type="linear" slope=".6" intercept=".3"/><feFuncG type="linear" slope=".6" intercept=".3"/><feFuncB type="linear" slope=".6" intercept=".3"/></feComponentTransfer>
  <feMorphology in="SourceGraphic" operator="erode" radius="1.3" result="inner"/>
  <feMerge><feMergeNode in="lite"/><feMergeNode in="inner"/></feMerge>
</filter>
</defs>
<g font-family="Liberation Sans, sans-serif" font-weight="bold">
<g filter="url(#tF1)">
<g filter="url(#tPA)"><text transform="translate(1075.5 1081.8) scale(0.719 1.016)" font-size="362" fill="url(#tgD)">D</text></g>
<g filter="url(#tPA)"><text transform="translate(1284.0 1081.8) scale(0.686 1.007)" font-size="362" fill="url(#tgO)">a</text></g>
<g filter="url(#tPB)"><text transform="translate(1442.0 1081.8) scale(0.923 0.998)" font-size="362" fill="url(#tgO)">r</text></g>
<g filter="url(#tPB)"><text transform="translate(1563.0 1081.8) scale(1.014 0.964)" font-size="362" fill="url(#tgO)">k</text></g>
</g>
<g filter="url(#tF2)">
<g filter="url(#tPA)"><text transform="translate(1075.5 1081.8) scale(0.719 1.016)" font-size="362" fill="#2a130b">D</text></g>
<g filter="url(#tPA)"><text transform="translate(1284.0 1081.8) scale(0.686 1.007)" font-size="362" fill="#2a130b">a</text></g>
<g filter="url(#tPB)"><text transform="translate(1442.0 1081.8) scale(0.923 0.998)" font-size="362" fill="#2a130b">r</text></g>
<g filter="url(#tPB)"><text transform="translate(1563.0 1081.8) scale(1.014 0.964)" font-size="362" fill="#2a130b">k</text></g>
</g>
<g filter="url(#tF3)">
<g filter="url(#tPA)"><text transform="translate(1075.5 1081.8) scale(0.719 1.016)" font-size="362" fill="url(#tfD)">D</text></g>
<g filter="url(#tPA)"><text transform="translate(1284.0 1081.8) scale(0.686 1.007)" font-size="362" fill="url(#tfa)">a</text></g>
<g filter="url(#tPB)"><text transform="translate(1442.0 1081.8) scale(0.923 0.998)" font-size="362" fill="url(#tfr)">r</text></g>
<g filter="url(#tPB)"><text transform="translate(1563.0 1081.8) scale(1.014 0.964)" font-size="362" fill="url(#tfk)">k</text></g>
</g>
</g>
</g></svg></div><!--THUMBS_END-->


<!-- ================= RIGHT PANEL ================= -->
<div id="rpanel" class="abs"></div>
<div class="h" style="top:96px;left:2031px;letter-spacing:.3px" id="h_text">Text</div>
<div class="abs" style="left:2006px;top:144px;width:444px;height:404px;background:#cdcdcd"></div>
<div class="abs" id="edtext" style="left:2015.5px;top:145.5px;font-weight:bold;font-size:57.5px;line-height:70px;color:#000;white-space:nowrap;transform-origin:0 0;transform:scaleX(.86);-webkit-text-stroke:2.2px #000;letter-spacing:1px">Dark</div>
<div class="abs" style="left:2100px;top:144px;width:2px;height:73px;background:#000"></div>

<!-- alignment icons -->
<svg class="abs" style="left:2026px;top:576px" width="140" height="34" viewBox="2026 576 140 34">
  <g stroke="#0a7aff" stroke-width="1.9">
    <path d="M2031 583.2 H2047 M2031 587.4 H2063 M2031 591.6 H2055 M2031 595.8 H2063 M2031 600 H2055 M2031 604.2 H2063"/>
  </g>
  <g stroke="#4a4a4a" stroke-width="1.9">
    <path d="M2085 583.2 H2101 M2077 587.4 H2109 M2081 591.6 H2105 M2077 595.8 H2109 M2081 600 H2105 M2077 604.2 H2109"/>
    <path d="M2139 583.2 H2155 M2123 587.4 H2155 M2131 591.6 H2155 M2123 595.8 H2155 M2131 600 H2155 M2123 604.2 H2155"/>
  </g>
</svg>
<div class="btn" style="left:2190px;top:576px;width:138px;height:36px;font-size:22px;line-height:35px;letter-spacing:.4px">Font</div>

<div class="lbl" style="left:1972px;top:640px;width:200px;letter-spacing:.77px">Line spacing</div>
<div class="field" style="left:2189px;top:637px;width:60px;height:36px;padding-top:5.5px;padding-left:5.5px">1.00</div>
<div class="stepper" style="left:2260px;top:634.5px"></div>
<div class="lbl" style="left:1972px;top:694px;width:200px;letter-spacing:.75px">Kerning</div>
<div class="field" style="left:2189px;top:691px;width:60px;height:36px;padding-top:6px">0.2</div>
<div class="stepper" style="left:2260px;top:688.5px"></div>
<svg class="abs" style="left:2260px;top:635px" width="23" height="95" viewBox="0 0 23 95"><g fill="none" stroke="#3a3a3a" stroke-width="2.3" stroke-linecap="round" stroke-linejoin="round"><path d="M6.8 14.8 L11.5 10 L16.2 14.8 M6.8 26.5 L11.5 31.3 L16.2 26.5"/><path d="M6.8 68.8 L11.5 64 L16.2 68.8 M6.8 80.5 L11.5 85.3 L16.2 80.5"/></g></svg>

<div class="sep" style="top:772px"></div>
<div class="h" style="top:792px;left:2030px;letter-spacing:1px">Material</div>
<div class="btn" style="left:2281px;top:789px;width:137px;height:36px;font-size:22px;line-height:35px;text-align:left;padding-left:13px;letter-spacing:1.5px">Preset</div>
<svg class="abs" style="left:2386px;top:795px" width="20" height="26" viewBox="0 0 20 26"><path d="M5 3.5 L15 13 L5 22.5" fill="none" stroke="#3a3a3a" stroke-width="2.6" stroke-linecap="round" stroke-linejoin="round"/></svg>
<div class="sep" style="top:840px"></div>
<div class="h" style="top:860px;left:2030px;letter-spacing:.9px">Effects</div>
<div class="sep" style="top:908px"></div>
<div class="h" style="top:928px;left:2030px;letter-spacing:.95px">Mask</div>
<div class="abs" style="left:2359px;top:925px;width:67px;height:35px;border-radius:18px;background:#fff;box-shadow:inset 0 0 0 1px rgba(0,0,0,.2)"></div>
<div class="abs" style="left:2358px;top:924px;width:37px;height:37px;border-radius:50%;background:#fff;box-shadow:0 0 0 1px rgba(0,0,0,.18),0 1px 2px rgba(0,0,0,.25)"></div>
<div class="sep" style="top:976px"></div>
<div class="h" style="top:996px;left:2030.5px;letter-spacing:.48px">Geometry</div>
<div class="sep" style="top:1044px"></div>


</div></div>
</body>
</html>
